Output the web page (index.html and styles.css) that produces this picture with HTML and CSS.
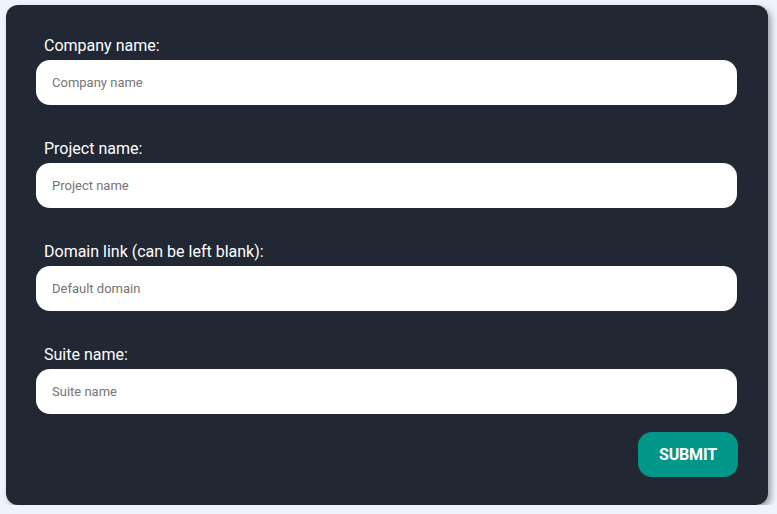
FILE: index.html
```html
<!DOCTYPE html>
<html>
<head>
<meta charset="utf-8">
<link rel="stylesheet" href="styles.css">
</head>
<body>
<form class="card">
  <div class="group">
    <label class="label">Company name:</label>
    <input class="input" type="text" placeholder="Company name">
  </div>
  <div class="group">
    <label class="label">Project name:</label>
    <input class="input" type="text" placeholder="Project name">
  </div>
  <div class="group">
    <label class="label">Domain link (can be left blank):</label>
    <input class="input" type="text" placeholder="Default domain">
  </div>
  <div class="group">
    <label class="label">Suite name:</label>
    <input class="input" type="text" placeholder="Suite name">
  </div>
  <div class="actions">
    <button class="submit" type="button">SUBMIT</button>
  </div>
</form>
</body>
</html>
```
FILE: styles.css
```css
html, body {
  margin: 0;
  background: #eef4fc;
  font-family: Roboto, "Liberation Sans", sans-serif;
}
body {
  padding: 5px 0 0 6px;
}
.card {
  box-sizing: border-box;
  width: 762px;
  height: 500px;
  background: #212733;
  border-radius: 12px;
  padding: 31px 31px 28px 30px;
  box-shadow: 3px 3px 6px rgba(0, 0, 0, 0.35);
  display: flex;
  flex-direction: column;
  gap: 34px;
}
.group {
  display: flex;
  flex-direction: column;
  gap: 5px;
}
.label {
  color: #ffffff;
  font-size: 16px;
  line-height: 19px;
  margin-left: 8px;
}
.input {
  box-sizing: border-box;
  height: 45px;
  width: 100%;
  border: none;
  border-radius: 14px;
  background: #ffffff;
  padding: 0 16px;
  font-family: Roboto, "Liberation Sans", sans-serif;
  font-size: 13px;
  color: #333;
  outline: none;
}
.input::placeholder {
  color: #757575;
}
.actions {
  display: flex;
  justify-content: flex-end;
  margin-top: -16px;
}
.submit {
  width: 100px;
  height: 45px;
  margin-right: -1px;
  border: none;
  border-radius: 14px;
  background: #009688;
  color: #ffffff;
  font-family: Roboto, "Liberation Sans", sans-serif;
  font-weight: 700;
  font-size: 16px;
  letter-spacing: -0.2px;
}
```
